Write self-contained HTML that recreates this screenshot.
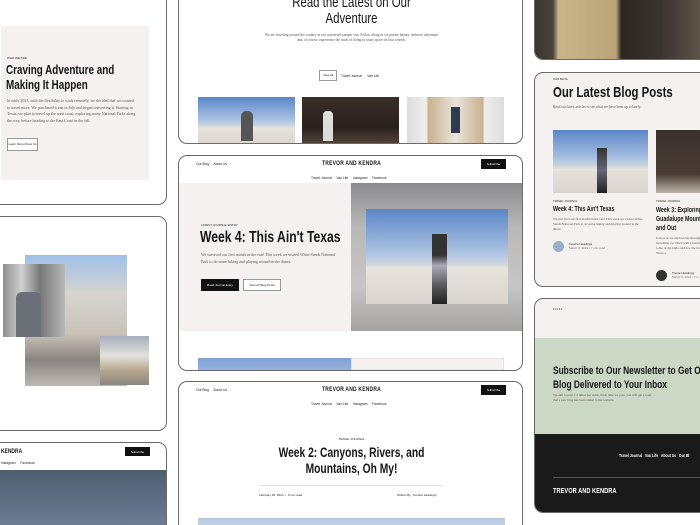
<!DOCTYPE html>
<html><head><meta charset="utf-8"><style>
*{margin:0;padding:0;box-sizing:border-box}
html,body{width:700px;height:525px;overflow:hidden}
body{background:#fff;position:relative;font-family:"Liberation Serif",serif;color:#222}
.card{position:absolute;border:1.5px solid #6a6a6a;border-radius:9px;background:#fff;overflow:hidden}
.a{position:absolute}
.h{font-family:"Liberation Sans",sans-serif;font-weight:bold;color:#151515;white-space:nowrap;transform:scaleX(.76);transform-origin:left top}
.c{transform-origin:center top}
.p{font-size:4px;line-height:6.5px;color:#555}
.t{font-family:"Liberation Sans",sans-serif;font-size:3.3px;color:#222;white-space:nowrap}
.btn{position:absolute;border:1px solid #999;font-family:"Liberation Sans",sans-serif;font-size:3px;text-align:center;background:#fff}
.blk{background:#111;color:#fff;border-color:#111}
.sky{background:linear-gradient(#5b86c8 0%,#a9c1e0 45%,#cfd6de 58%,#e6e2dc 62%,#d9d4cd 100%)}
.cave{background:linear-gradient(#3a2e28,#2a211c 60%,#5a4a40)}
.beige{background:#f5f1f0}
</style></head><body>

<!-- Card A -->
<div class="card" style="left:-10px;top:-12px;width:177px;height:217px">
  <div class="a beige" style="left:10px;top:37px;width:148px;height:154px"></div>
  <div class="a t" style="left:16px;top:67px;font-size:3px">WHO WE ARE</div>
  <div class="a h" style="left:15px;top:73px;font-size:13px;line-height:15px">Craving Adventure and<br>Making It Happen</div>
  <div class="a p" style="left:16px;top:109px;width:130px;font-size:4px;line-height:6.5px">In early 2023, with the flexibility to work remotely, we decided that we wanted to travel more. We purchased a van in July and began converting it. Starting in Texas, we plan to travel up the west coast, exploring many National Parks along the way, before heading to the East Coast in the fall.</div>
  <div class="btn" style="left:16px;top:149px;width:31px;height:13px;line-height:11px">Learn More About Us</div>
</div>

<!-- Card B -->
<div class="card" style="left:-10px;top:216px;width:177px;height:215px">
  <div class="a" style="left:34px;top:38px;width:102px;height:131px;background:linear-gradient(#9fc0ea 0%,#d7d4cf 30%,#c8c2b8 60%,#8a8580 80%,#bdb8b2 100%)"></div>
  <div class="a" style="left:12px;top:47px;width:62px;height:73px;background:linear-gradient(90deg,#8e8e8e,#cfcfcf 30%,#777 60%,#b9b9b9)"></div>
  <div class="a" style="left:25px;top:75px;width:25px;height:45px;background:#6b6f78;border-radius:6px 6px 0 0"></div>
  <div class="a" style="left:109px;top:119px;width:49px;height:49px;background:linear-gradient(#a6aebc,#e3e1dd 40%,#b7a78e 70%,#8b8780)"></div>
</div>

<!-- Card C -->
<div class="card" style="left:-10px;top:442px;width:177px;height:100px">
  <div class="a h" style="left:10px;top:5px;font-size:6.5px">KENDRA</div>
  <div class="btn blk" style="left:134px;top:4px;width:25px;height:9px;line-height:8px">Subscribe</div>
  <div class="a t" style="left:10px;top:18px">Instagram &nbsp;&nbsp;&nbsp; Facebook</div>
  <div class="a" style="left:0;top:27px;width:177px;height:80px;background:linear-gradient(#4f5d70,#6a7890 60%,#7f8ba0)"></div>
</div>

<!-- Card D -->
<div class="card" style="left:178px;top:-12px;width:345px;height:156px">
  <div class="a h c" style="left:0;width:345px;text-align:center;top:6px;font-size:15px;line-height:16px;font-weight:normal">Read the Latest on Our<br>Adventure</div>
  <div class="a p" style="left:85px;top:44px;width:175px;text-align:center;font-size:3.6px;line-height:5px">We are traveling around the country in our converted camper van. Follow along as we pursue beauty, embrace adventure and, of course, experience the trials of living in a tiny space on four wheels.</div>
  <div class="btn" style="left:140px;top:81px;width:18px;height:11px;line-height:9px">View all</div>
  <div class="a t" style="left:162px;top:85px">Travel Journal &nbsp;&nbsp;&nbsp;&nbsp; Van Life</div>
  <div class="a sky" style="left:19px;top:108px;width:97px;height:50px"></div>
  <div class="a" style="left:62px;top:122px;width:12px;height:30px;background:#555;border-radius:5px 5px 0 0"></div>
  <div class="a cave" style="left:123px;top:108px;width:97px;height:50px"></div>
  <div class="a" style="left:144px;top:122px;width:10px;height:30px;background:#ddd;border-radius:4px 4px 0 0"></div>
  <div class="a" style="left:228px;top:108px;width:97px;height:50px;background:linear-gradient(90deg,#ddd 0,#eee 20%,#c9b28f 22%,#e9e4da 50%,#c9b28f 78%,#eee 80%,#ddd)"></div>
  <div class="a" style="left:272px;top:118px;width:9px;height:26px;background:#2f3a55"></div>
</div>

<!-- Card E -->
<div class="card" style="left:178px;top:155px;width:345px;height:216px">
  <div class="a t" style="left:17px;top:6px">Our Blog &nbsp;&nbsp;&nbsp; About Us</div>
  <div class="a h c" style="left:0;width:345px;text-align:center;top:4px;font-size:6.5px;letter-spacing:.3px">TREVOR AND KENDRA</div>
  <div class="btn blk" style="left:302px;top:3px;width:25px;height:10px;line-height:9px">Subscribe</div>
  <div class="a t" style="left:132px;top:20px">Travel Journal &nbsp;&nbsp;&nbsp; Van Life &nbsp;&nbsp;&nbsp; Instagram &nbsp;&nbsp;&nbsp; Facebook</div>
  <div class="a beige" style="left:0;top:27px;width:172px;height:148px"></div>
  <div class="a" style="left:172px;top:27px;width:172px;height:148px;background:linear-gradient(#8a8a8e,#b9b8b8 30%,#c8c6c4 70%,#a5a3a2)"></div>
  <div class="a sky" style="left:187px;top:53px;width:142px;height:95px"></div>
  <div class="a" style="left:253px;top:78px;width:15px;height:70px;background:linear-gradient(#333 0,#333 30%,#aab 45%,#555 75%,#222)"></div>
  <div class="a t" style="left:22px;top:67px;font-size:3px">LATEST JOURNAL ENTRY</div>
  <div class="a h" style="left:21px;top:73px;font-size:16px">Week 4: This Ain't Texas</div>
  <div class="a p" style="left:22px;top:96px;width:135px;font-size:4px;line-height:6.5px">We survived our first month in the van! This week we visited White Sands National Park to do some hiking and playing around in the dunes.</div>
  <div class="btn blk" style="left:22px;top:123px;width:38px;height:12px;line-height:10px">Read Journal Entry</div>
  <div class="btn" style="left:64px;top:123px;width:38px;height:12px;line-height:10px">View All Blog Posts</div>
  <div class="a" style="left:19px;top:202px;width:154px;height:20px;background:linear-gradient(#7fa0d6,#a8bde0)"></div>
  <div class="a beige" style="left:172px;top:202px;width:153px;height:12px;border:1px solid #e6e0df"></div>
</div>

<!-- Card F -->
<div class="card" style="left:178px;top:381px;width:345px;height:160px">
  <div class="a t" style="left:17px;top:6px">Our Blog &nbsp;&nbsp;&nbsp; About Us</div>
  <div class="a h c" style="left:0;width:345px;text-align:center;top:4px;font-size:6.5px;letter-spacing:.3px">TREVOR AND KENDRA</div>
  <div class="btn blk" style="left:302px;top:3px;width:25px;height:10px;line-height:9px">Subscribe</div>
  <div class="a t" style="left:132px;top:20px">Travel Journal &nbsp;&nbsp;&nbsp; Van Life &nbsp;&nbsp;&nbsp; Instagram &nbsp;&nbsp;&nbsp; Facebook</div>
  <div class="a t" style="left:0;width:345px;text-align:center;top:55px;font-size:3px">TRAVEL JOURNAL</div>
  <div class="a h c" style="left:0;width:345px;text-align:center;top:63px;font-size:13.5px;line-height:16px">Week 2: Canyons, Rivers, and<br>Mountains, Oh My!</div>
  <div class="a" style="left:80px;top:103px;width:184px;height:1px;background:#e8e4e3"></div>
  <div class="a t" style="left:80px;top:111px;font-size:3px">February 25, 2024 &nbsp;•&nbsp; 6 min read</div>
  <div class="a t" style="left:218px;top:111px;font-size:3px">Written By &nbsp; Kendra Headings</div>
  <div class="a" style="left:19px;top:136px;width:307px;height:20px;background:linear-gradient(#b8c8e0,#d8dfe8)"></div>
</div>

<!-- Card G -->
<div class="card" style="left:534px;top:-12px;width:180px;height:72px">
  <div class="a" style="left:0;top:0;width:180px;height:72px;background:linear-gradient(90deg,#3a3530 0,#4a433a 10%,#c9b58a 13%,#b9a478 45%,#2b2622 48%,#3a3430 70%,#6b5f52 100%)"></div>
</div>

<!-- Card H -->
<div class="card" style="left:534px;top:72px;width:180px;height:215px;background:#f5f1f0">
  <div class="a t" style="left:18px;top:4px;font-size:2.8px">OUR BLOG</div>
  <div class="a h" style="left:18px;top:11px;font-size:15px">Our Latest Blog Posts</div>
  <div class="a p" style="left:18px;top:31px;font-size:3.6px;white-space:nowrap">Read our latest articles to see what we have been up to lately.</div>
  <div class="a sky" style="left:18px;top:57px;width:95px;height:63px"></div>
  <div class="a" style="left:62px;top:75px;width:10px;height:45px;background:linear-gradient(#333,#667 50%,#222)"></div>
  <div class="a" style="left:121px;top:57px;width:60px;height:63px;background:linear-gradient(#3a302b,#4a3c34 70%,#bcb3a8)"></div>
  <div class="a t" style="left:18px;top:126px;font-size:2.8px">TRAVEL JOURNAL</div>
  <div class="a h" style="left:18px;top:133px;font-size:7px">Week 4: This Ain't Texas</div>
  <div class="a p" style="left:18px;top:144px;width:95px;font-size:3.3px;line-height:5px">We survived our first month in the van! This week we visited White Sands National Park to do some hiking and playing around in the dunes.</div>
  <div class="a" style="left:18px;top:168px;width:11px;height:11px;border-radius:50%;background:#9bb0c8"></div>
  <div class="a t" style="left:34px;top:169px;font-size:3px">Kendra Headings<br><span style="color:#777">March 3, 2024 • 7 min read</span></div>
  <div class="a t" style="left:121px;top:126px;font-size:2.8px">TRAVEL JOURNAL</div>
  <div class="a h" style="left:121px;top:133px;font-size:7px;line-height:9px">Week 3: Exploring<br>Guadalupe Mount<br>and Out</div>
  <div class="a p" style="left:121px;top:163px;width:60px;font-size:3.3px;line-height:5px">Join us as we explore the through its incredible cav filled with a fascinating hi some of the highs and low the line between Texas a</div>
  <div class="a" style="left:121px;top:197px;width:11px;height:11px;border-radius:50%;background:#333"></div>
  <div class="a t" style="left:137px;top:198px;font-size:3px">Trevor Headings<br><span style="color:#777">March 6, 2024 • 7 m</span></div>
</div>

<!-- Card I -->
<div class="card" style="left:534px;top:298px;width:180px;height:215px;background:#f5f1f0">
  <div class="a t" style="left:18px;top:7px;font-size:4px;letter-spacing:.5px">•••••</div>
  <div class="a" style="left:0;top:39px;width:180px;height:96px;background:#ccd8c6"></div>
  <div class="a h" style="left:18px;top:66px;font-size:11px;line-height:13.5px">Subscribe to Our Newsletter to Get O<br>Blog Delivered to Your Inbox</div>
  <div class="a p" style="left:18px;top:94px;font-size:3.3px;line-height:5px;white-space:nowrap">We aim to post 1-2 times per week. Each time we post, you will get a notif<br>that a new blog has been added to the website.</div>
  <div class="a" style="left:0;top:135px;width:180px;height:80px;background:#1b1a1a"></div>
  <div class="a h" style="left:84px;top:154px;font-size:4.5px;color:#fff">Travel Journal &nbsp; Van Life &nbsp; About Us &nbsp; Our Bl</div>
  <div class="a" style="left:18px;top:178px;width:162px;height:1px;background:#555"></div>
  <div class="a h" style="left:18px;top:187px;font-size:7.5px;color:#fff">TREVOR AND KENDRA</div>
</div>

</body></html>
